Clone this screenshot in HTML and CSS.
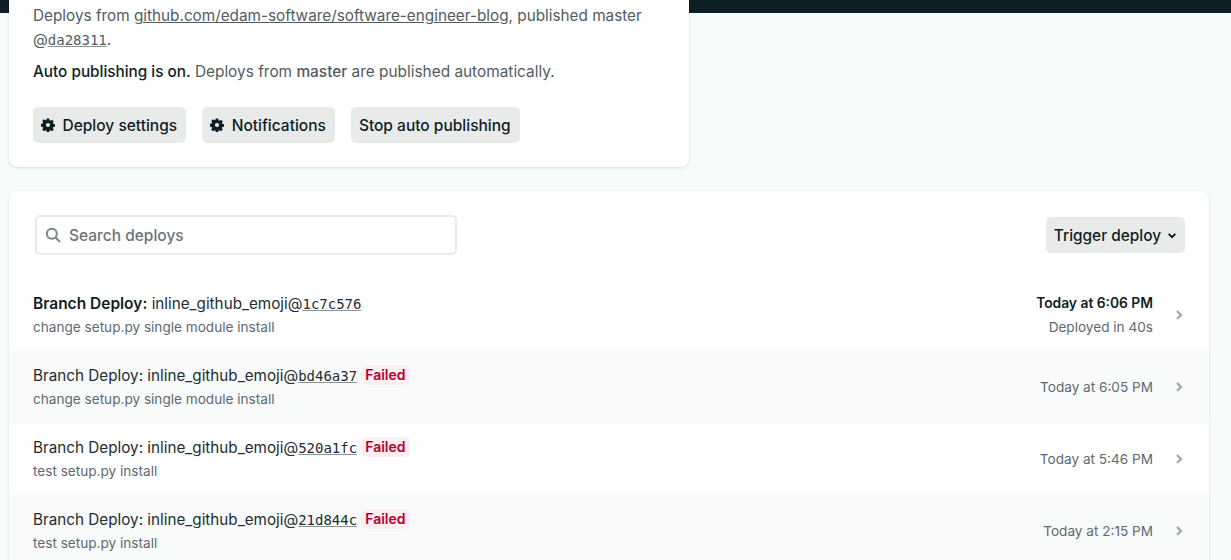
FILE: index.html
```html
<!DOCTYPE html>
<html lang="en">
<head>
<meta charset="utf-8">
<title>Deploys</title>
<link rel="stylesheet" href="styles.css">
</head>
<body>
<svg class="defs" width="0" height="0" aria-hidden="true">
  <symbol id="gear" viewBox="0 0 16 16"><path fill-rule="evenodd" d="M6.600 .5h2.800l.4 2 1.100.5 1.700-1.100 2 2-1.100 1.700.5 1.100 2 .4v2.800l-2 .4-.5 1.100 1.100 1.700-2 2-1.700-1.100-1.100.5-.4 2H6.600l-.4-2-1.100-.5-1.700 1.100-2-2 1.100-1.700-.5-1.100-2-.4V6.600l2-.4.500-1.100-1.100-1.700 2-2 1.700 1.100 1.100-.5zM8 5.600a2.400 2.400 0 1 0 0 4.800 2.400 2.400 0 0 0 0-4.800z"/></symbol>
  <symbol id="chev" viewBox="0 0 8 12"><path d="M2 2l4 4-4 4" fill="none" stroke="currentColor" stroke-width="2.400"/></symbol>
</svg>
<main class="page">
  <section class="card card-top">
    <p class="info">Deploys from <a href="#">github.com/edam-software/software-engineer-blog</a>, published master<br>@<a href="#" class="mono">da28311</a>.</p>
    <p class="info auto"><strong>Auto publishing is on.</strong> Deploys from <span class="mid">master</span> are published automatically.</p>
    <div class="actions">
      <button class="btn"><svg class="gear"><use href="#gear"/></svg>Deploy settings</button>
      <button class="btn"><svg class="gear"><use href="#gear"/></svg>Notifications</button>
      <button class="btn">Stop auto publishing</button>
    </div>
  </section>
  <section class="card card-list">
    <div class="toolbar">
      <label class="search">
        <svg class="search-icon" viewBox="0 0 16 16"><circle cx="6.800" cy="6.800" r="5" fill="none" stroke="currentColor" stroke-width="2"/><path d="M10.500 10.500L15 15" stroke="currentColor" stroke-width="2"/></svg>
        <span>Search deploys</span>
      </label>
      <button class="btn trigger">Trigger deploy<svg class="down" viewBox="0 0 12 8"><path d="M2 2l4 4 4-4" fill="none" stroke="currentColor" stroke-width="2.400"/></svg></button>
    </div>
    <ul class="rows">
      <li class="row current">
        <div class="main">
          <div class="title"><strong>Branch Deploy:</strong> inline_github_emoji@<a href="#" class="mono">1c7c576</a></div>
          <div class="sub">change setup.py single module install</div>
        </div>
        <div class="when"><div class="time">Today at 6:06 PM</div><div class="sub">Deployed in 40s</div></div>
        <svg class="chev"><use href="#chev"/></svg>
      </li>
      <li class="row">
        <div class="main">
          <div class="title">Branch Deploy: inline_github_emoji@<a href="#" class="mono">bd46a37</a><span class="failed">Failed</span></div>
          <div class="sub">change setup.py single module install</div>
        </div>
        <div class="when"><div class="time">Today at 6:05 PM</div></div>
        <svg class="chev"><use href="#chev"/></svg>
      </li>
      <li class="row">
        <div class="main">
          <div class="title">Branch Deploy: inline_github_emoji@<a href="#" class="mono">520a1fc</a><span class="failed">Failed</span></div>
          <div class="sub">test setup.py install</div>
        </div>
        <div class="when"><div class="time">Today at 5:46 PM</div></div>
        <svg class="chev"><use href="#chev"/></svg>
      </li>
      <li class="row">
        <div class="main">
          <div class="title">Branch Deploy: inline_github_emoji@<a href="#" class="mono">21d844c</a><span class="failed">Failed</span></div>
          <div class="sub">test setup.py install</div>
        </div>
        <div class="when"><div class="time">Today at 2:15 PM</div></div>
        <svg class="chev"><use href="#chev"/></svg>
      </li>
    </ul>
  </section>
</main>
</body>
</html>
```
FILE: styles.css
```css
* { box-sizing: border-box; }
html, body { margin: 0; height: 100%; overflow: hidden; }
body {
  font-family: Inter, "Liberation Sans", sans-serif;
  font-size: 15.300px;
  color: #0e1e25;
  background: linear-gradient(#0e1e25 0 13px, #f6fcfc 13px);
}
.defs { display: block; height: 0; }
.page { padding: 0 22px 0 9px; display: flex; flex-direction: column; gap: 24px; align-items: flex-start; }
.card { background: #fff; border-radius: 8px; box-shadow: 0 1px 3px rgba(14,30,37,.14); }
.card-top { width: 680px; height: 167px; padding: 4px 24px 0; border-radius: 0 0 8px 8px; }
.card-list { width: 1200px; height: 400px; padding-top: 24px; }
.info { margin: 0; line-height: 24px; color: #525c60; }
.info a { color: #525c60; }
.auto { margin-top: 8px; font-size: 15.400px; }
.info strong { font-weight: 500; font-size: 15.300px; color: #0e1e25; }
.mid { font-weight: 500; }
.mono { font-family: "DejaVu Sans Mono", "Liberation Mono", monospace; font-size: 14px; line-height: 1; text-decoration-color: #8a9397; }
.actions { display: flex; gap: 16px; margin-top: 23px; }
.btn {
  display: inline-flex; align-items: center; gap: 7.500px;
  height: 36px; padding: 0 9px 0 8px; border: 0; border-radius: 5px;
  background: #e9ebeb; color: #0e1e25;
  font: 500 15.500px Inter, "Liberation Sans", sans-serif;
}
.gear { width: 14px; height: 14px; fill: #0e1e25; }
.toolbar { display: flex; justify-content: space-between; align-items: center; padding: 0 24px 0 26px; }
.search {
  display: flex; align-items: center; gap: 8px;
  width: 422px; height: 40px; padding: 0 8px;
  border: 2px solid #e9ebeb; border-radius: 5px;
  color: #6b7478; font-weight: 500; font-size: 15.500px;
}
.search-icon { width: 16px; height: 16px; color: #7b8588; }
.trigger { gap: 6px; padding: 0 8px; font-size: 15.400px; }
.down { width: 10px; height: 7px; }
.rows { list-style: none; margin: 24px 0 0; padding: 0; }
.row { display: flex; align-items: center; height: 72px; padding: 0 26px 0 24px; }
.row:nth-child(even) { background: #f9fbfb; }
.main { flex: 1; }
.title { position: relative; top: 1px; font-size: 15.250px; line-height: 24px; color: #1e2c33; display: flex; align-items: center; white-space: pre; }
.title a { color: #1e2c33; }
.title strong { font-weight: 600; color: #0e1e25; font-size: 15.500px; }
.sub { font-size: 13.600px; line-height: 24px; color: #5e6a6f; }
.failed {
  position: relative; top: -1px; margin-left: 4px; padding: 0 4px; border-radius: 5px; background: #fdeef2;
  color: #b5002d; font-size: 14px; font-weight: 600; line-height: 20px;
}
.when { text-align: right; }
.time { font-size: 13.600px; line-height: 24px; color: #5e6a6f; }
.current .time { color: #0e1e25; font-weight: 600; font-size: 13.800px; }
.chev { width: 8px; height: 12px; margin-left: 22px; color: #a3abae; }
```
